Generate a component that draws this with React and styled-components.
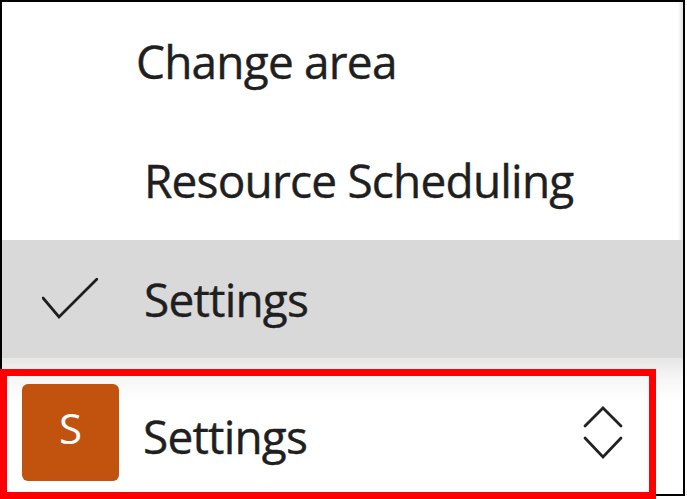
import React from "react";
import styled, { createGlobalStyle } from "styled-components";

const GlobalStyle = createGlobalStyle`
  html, body { margin: 0; padding: 0; background: #ffffff; }
  body { font-family: "Open Sans", "Noto Sans", sans-serif; }
`;

const Stage = styled.div`
  position: relative;
  width: 687px;
  height: 499px;
  overflow: hidden;
`;

const Panel = styled.div`
  width: 685px;
  height: 496px;
  box-sizing: border-box;
  border: 2px solid #000;
  display: flex;
  flex-direction: column;
  background: #fff;
  box-shadow: inset -4px 0 3px -1px rgba(0, 0, 0, 0.1);
  color: #1f1f1f;
`;

const Label = styled.span`
  font-family: "Open Sans", "Noto Sans", sans-serif;
  font-size: 46px;
  line-height: 46px;
  letter-spacing: -0.8px;
  white-space: nowrap;
  -webkit-text-stroke: 0.4px #1f1f1f;
  margin-top: ${(p) => p.$shift || 0}px;
`;

const Header = styled.div`
  height: 118px;
  display: flex;
  align-items: center;
  padding-left: 134px;
  flex: none;
`;

const Item = styled.div`
  height: ${(p) => p.$h}px;
  display: flex;
  align-items: center;
  padding-left: 40px;
  gap: 46px;
  flex: none;
  background: ${(p) => (p.$selected ? "#d9d9d9" : "transparent")};
`;

const CheckSlot = styled.div`
  width: 56px;
  height: 40px;
  display: flex;
  align-items: center;
  justify-content: center;
  flex: none;
`;

const Bar = styled.div`
  flex: 1;
  display: flex;
  align-items: center;
  padding: 26px 60px 13px 20px;
  gap: 24px;
  background: linear-gradient(#e6e6e6 0px, #f7f7f7 22px, #ffffff 44px);
`;

const Tile = styled.div`
  width: 97px;
  height: 97px;
  border-radius: 6px;
  background: #c2530f;
  color: #fff;
  display: flex;
  align-items: center;
  justify-content: center;
  flex: none;
  font-family: "Open Sans", "Noto Sans", sans-serif;
  font-size: 42px;
  line-height: 42px;
  padding-bottom: 10px;
  box-sizing: border-box;
`;

const Spacer = styled.div`
  flex: 1;
`;

const Chevrons = styled.svg`
  width: 40px;
  height: 54px;
  flex: none;
`;

const Highlight = styled.div`
  position: absolute;
  left: 0;
  top: 369px;
  width: 656px;
  height: 130px;
  box-sizing: border-box;
  border: 7px solid #ff0000;
  pointer-events: none;
`;

export default function App() {
  return (
    <>
      <GlobalStyle />
      <Stage>
        <Panel>
          <Header>
            <Label>Change area</Label>
          </Header>
          <Item $h={120}>
            <CheckSlot />
            <Label>Resource Scheduling</Label>
          </Item>
          <Item $h={118} $selected>
            <CheckSlot>
              <svg width="56" height="42" viewBox="0 0 56 42">
                <polyline
                  points="1,20 17,39 55,1"
                  fill="none"
                  stroke="#1e1e1e"
                  strokeWidth="2.8"
                  strokeLinecap="round"
                  strokeLinejoin="miter"
                />
              </svg>
            </CheckSlot>
            <Label>Settings</Label>
          </Item>
          <Bar>
            <Tile>S</Tile>
            <Label $shift={6}>Settings</Label>
            <Spacer />
            <Chevrons viewBox="0 0 40 54">
              <polyline
                points="2,20 20,2 38,20"
                fill="none"
                stroke="#222"
                strokeWidth="2.8"
                strokeLinecap="round"
                strokeLinejoin="miter"
              />
              <polyline
                points="2,32 20,51 38,32"
                fill="none"
                stroke="#222"
                strokeWidth="2.8"
                strokeLinecap="round"
                strokeLinejoin="miter"
              />
            </Chevrons>
          </Bar>
        </Panel>
        <Highlight />
      </Stage>
    </>
  );
}
